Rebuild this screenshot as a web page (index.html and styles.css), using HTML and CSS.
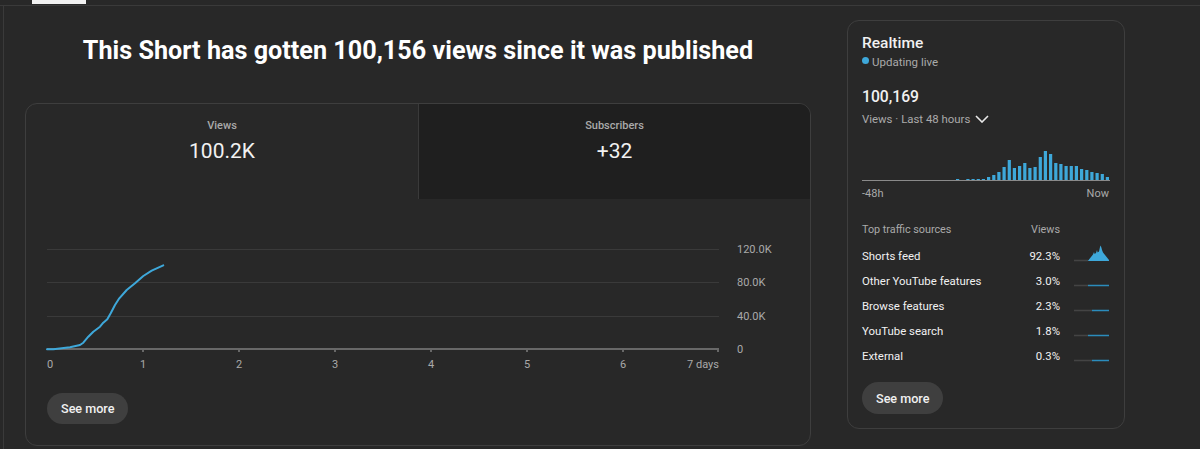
FILE: index.html
```html
<!DOCTYPE html>
<html lang="en">
<head>
  <meta charset="UTF-8" />
  <meta name="viewport" content="width=device-width, initial-scale=1.0"/>
  <title>Short analytics - Overview</title>
  <link rel="stylesheet" href="styles.css">
</head>
<body>
  <div class="topbar"><span class="tab-indicator"></span></div>

  <div class="main">
    <section class="overview">
      <h1 class="headline">This Short has gotten 100,156 views since it was published</h1>

      <div class="card chart-card">
        <div class="metric-tabs">
          <div class="metric-tab active">
            <div class="metric-label">Views</div>
            <div class="metric-value">100.2K</div>
          </div>
          <div class="metric-tab">
            <div class="metric-label">Subscribers</div>
            <div class="metric-value">+32</div>
          </div>
        </div>

        <svg class="line-chart" width="784" height="175" viewBox="0 0 784 175">
          <g class="grid">
            <line x1="21" y1="50.5" x2="693" y2="50.5" />
            <line x1="21" y1="83.5" x2="693" y2="83.5" />
            <line x1="21" y1="117.5" x2="693" y2="117.5" />
          </g>
          <g class="axis">
            <line x1="21" y1="150" x2="693" y2="150" />
            <line x1="117" y1="150" x2="117" y2="153" />
            <line x1="213" y1="150" x2="213" y2="153" />
            <line x1="309" y1="150" x2="309" y2="153" />
            <line x1="405" y1="150" x2="405" y2="153" />
            <line x1="501" y1="150" x2="501" y2="153" />
            <line x1="597" y1="150" x2="597" y2="153" />
            <line x1="692" y1="150" x2="692" y2="153" />
          </g>
          <g class="axis-text">
            <text x="711" y="54">120.0K</text>
            <text x="711" y="87">80.0K</text>
            <text x="711" y="121">40.0K</text>
            <text x="711" y="154">0</text>
            <text x="21" y="169">0</text>
            <text x="117" y="169" text-anchor="middle">1</text>
            <text x="213" y="169" text-anchor="middle">2</text>
            <text x="309" y="169" text-anchor="middle">3</text>
            <text x="405" y="169" text-anchor="middle">4</text>
            <text x="501" y="169" text-anchor="middle">5</text>
            <text x="597" y="169" text-anchor="middle">6</text>
            <text x="693" y="169" text-anchor="end">7 days</text>
          </g>
          <polyline class="views-line" points="21,150.3 27.3,150.3 44,148.3 54,146 57.3,143.7 62.3,137.7 67.3,132.7 74,127.7 77.3,123.7 81.3,120.3 84.7,114.3 89,106 93.3,99.3 100.7,91 109,84.3 117.3,77 125.7,71.7 137.3,66.3" />
        </svg>

        <button class="see-more">See more</button>
      </div>
    </section>

    <aside class="card realtime">
      <div class="rt-title">Realtime</div>
      <div class="rt-live"><span class="live-dot"></span>Updating live</div>

      <div class="rt-total">100,169</div>
      <div class="rt-range">
        Views · Last 48 hours
        <svg class="chevron" width="14" height="8" viewBox="0 0 14 8">
          <path d="M1 1l6 6 6-6" />
        </svg>
      </div>

      <svg class="rt-bars" width="248" height="42" viewBox="0 0 248 42">
        <line class="rt-base" x1="0" y1="40.5" x2="248" y2="40.5" />
        <g class="bar">
          <rect x="94.0" y="39" width="3.2" height="1" />
          <rect x="104.3" y="39" width="3.2" height="1" />
          <rect x="109.5" y="39" width="3.2" height="1" />
          <rect x="114.7" y="39" width="3.2" height="1" />
          <rect x="119.8" y="39" width="3.2" height="1" />
          <rect x="125.0" y="37" width="3.2" height="3" />
          <rect x="130.2" y="35" width="3.2" height="5" />
          <rect x="135.3" y="32" width="3.2" height="8" />
          <rect x="140.5" y="27" width="3.2" height="13" />
          <rect x="145.7" y="20" width="3.2" height="20" />
          <rect x="150.8" y="28" width="3.2" height="12" />
          <rect x="156.0" y="26" width="3.2" height="14" />
          <rect x="161.2" y="23" width="3.2" height="17" />
          <rect x="166.3" y="28" width="3.2" height="12" />
          <rect x="171.5" y="27" width="3.2" height="13" />
          <rect x="176.7" y="17" width="3.2" height="23" />
          <rect x="181.8" y="11" width="3.2" height="29" />
          <rect x="187.0" y="14" width="3.2" height="26" />
          <rect x="192.2" y="23" width="3.2" height="17" />
          <rect x="197.3" y="24" width="3.2" height="16" />
          <rect x="202.5" y="26" width="3.2" height="14" />
          <rect x="207.7" y="26" width="3.2" height="14" />
          <rect x="212.8" y="26" width="3.2" height="14" />
          <rect x="218.0" y="29" width="3.2" height="11" />
          <rect x="223.2" y="30" width="3.2" height="10" />
          <rect x="228.3" y="32" width="3.2" height="8" />
          <rect x="233.5" y="33" width="3.2" height="7" />
          <rect x="238.7" y="34" width="3.2" height="6" />
          <rect x="243.8" y="37" width="3.2" height="3" />
        </g>
      </svg>
      <div class="rt-axis"><span>-48h</span><span>Now</span></div>

      <div class="traffic">
        <div class="traffic-row traffic-head">
          <span>Top traffic sources</span>
          <span class="pct">Views</span>
          <span></span>
        </div>
        <div class="traffic-row">
          <span>Shorts feed</span>
          <span class="pct">92.3%</span>
          <svg class="spark" width="36" height="25" viewBox="0 0 36 25">
            <line class="spark-off" x1="0" y1="17.5" x2="14" y2="17.5" />
            <polygon class="spark-area" points="14,17.8 17,14 19,11.5 20,9 20.6,11 22,10 23,7 23.6,9.5 25,8.5 26,4 26.7,2.5 27.5,5 28,7 29,9.5 31,12 33,14.5 35,17 35,18 14,18" />
          </svg>
        </div>
        <div class="traffic-row">
          <span>Other YouTube features</span>
          <span class="pct">3.0%</span>
          <svg class="spark" width="36" height="25" viewBox="0 0 36 25">
            <line class="spark-off" x1="0" y1="17.5" x2="14" y2="17.5" />
            <line class="spark-on" x1="14" y1="17.5" x2="35" y2="17.5" />
          </svg>
        </div>
        <div class="traffic-row">
          <span>Browse features</span>
          <span class="pct">2.3%</span>
          <svg class="spark" width="36" height="25" viewBox="0 0 36 25">
            <line class="spark-off" x1="0" y1="17.5" x2="18" y2="17.5" />
            <line class="spark-on" x1="18" y1="17.5" x2="35" y2="17.5" />
          </svg>
        </div>
        <div class="traffic-row">
          <span>YouTube search</span>
          <span class="pct">1.8%</span>
          <svg class="spark" width="36" height="25" viewBox="0 0 36 25">
            <line class="spark-off" x1="0" y1="17.5" x2="14" y2="17.5" />
            <line class="spark-on" x1="14" y1="17.5" x2="35" y2="17.5" />
          </svg>
        </div>
        <div class="traffic-row">
          <span>External</span>
          <span class="pct">0.3%</span>
          <svg class="spark" width="36" height="25" viewBox="0 0 36 25">
            <line class="spark-off" x1="0" y1="17.5" x2="18" y2="17.5" />
            <line class="spark-on" x1="18" y1="17.5" x2="35" y2="17.5" />
          </svg>
        </div>
      </div>

      <button class="see-more">See more</button>
    </aside>
  </div>
</body>
</html>
```

FILE: styles.css
```css
* {
  box-sizing: border-box;
  margin: 0;
  padding: 0;
}

body {
  font-family: Roboto, 'Noto Sans', sans-serif;
  background-color: #282828;
  color: #f1f1f1;
  overflow: hidden;
}

.topbar {
  height: 6px;
  border-bottom: 1px solid #3a3a3a;
  padding-left: 32px;
}

.tab-indicator {
  display: block;
  width: 54px;
  height: 4px;
  background-color: #f1f1f1;
}

.main {
  display: flex;
  align-items: flex-start;
  gap: 36px;
  margin-left: 3px;
  border-left: 1px solid #3a3a3a;
  padding: 14px 0 0 21px;
  min-height: 443px;
}

.overview {
  width: 786px;
}

.headline {
  font-size: 25.2px;
  line-height: 32px;
  font-weight: 700;
  color: #fff;
  text-align: center;
  margin: 15px 0 36px;
}

.card {
  border: 1px solid #3e3e3e;
  border-radius: 12px;
  overflow: hidden;
}

/* tarjeta del grafico */
.metric-tabs {
  display: grid;
  grid-template-columns: 1fr 1fr;
  height: 95px;
}

.metric-tab {
  text-align: center;
  padding-top: 14px;
  background-color: #1f1f1f;
  border-left: 1px solid #3a3a3a;
}

.metric-tab.active {
  background-color: transparent;
  border-left: none;
}

.metric-label {
  font-size: 11px;
  line-height: 16px;
  font-weight: 500;
  color: #aaa;
}

.metric-value {
  font-size: 21px;
  line-height: 28px;
  margin-top: 3px;
  color: #f1f1f1;
}

.line-chart {
  display: block;
}

.grid line {
  stroke: #3a3a3a;
  stroke-width: 1;
}

.axis line {
  stroke: #686868;
  stroke-width: 2;
}

.axis-text text {
  font-family: Roboto, sans-serif;
  font-size: 11px;
  fill: #aaa;
}

.views-line {
  fill: none;
  stroke: #3ea8da;
  stroke-width: 2;
  stroke-linejoin: round;
  stroke-linecap: round;
}

.see-more {
  display: block;
  height: 31px;
  padding: 0 14px;
  border: none;
  border-radius: 16px;
  background-color: #3f3f3f;
  color: #f1f1f1;
  font-family: Roboto, sans-serif;
  font-size: 12.6px;
  font-weight: 500;
  cursor: pointer;
}

.chart-card .see-more {
  margin: 19px 0 21px 21px;
}

/* tiempo real */
.realtime {
  width: 278px;
  padding: 11px 14px 14px;
}

.rt-title {
  font-size: 15.5px;
  line-height: 22px;
  font-weight: 500;
}

.rt-live {
  display: flex;
  align-items: flex-start;
  font-size: 11.5px;
  line-height: 16px;
  color: #aaa;
}

.live-dot {
  width: 7px;
  height: 7px;
  border-radius: 50%;
  background-color: #3ea8da;
  margin: 3px 3px 0 0;
}

.rt-total {
  font-size: 15.7px;
  line-height: 22px;
  font-weight: 500;
  margin-top: 16px;
}

.rt-range {
  display: flex;
  align-items: center;
  gap: 5px;
  font-size: 11.4px;
  line-height: 16px;
  color: #aaa;
  margin-top: 3px;
}

.chevron path {
  fill: none;
  stroke: #e8e8e8;
  stroke-width: 1.6;
}

.rt-bars {
  display: block;
  margin-top: 13px;
}

.rt-base {
  stroke: #8a8a8a;
  stroke-width: 1;
}

.bar rect {
  fill: #3ea8da;
}

.rt-axis {
  display: flex;
  justify-content: space-between;
  font-size: 11px;
  line-height: 14px;
  color: #aaa;
  margin-top: 5px;
  padding-right: 1px;
}

.traffic {
  margin-top: 16px;
}

.traffic-row {
  display: grid;
  grid-template-columns: 1fr 50px 36px;
  column-gap: 14px;
  align-items: center;
  height: 25px;
  font-size: 11.4px;
  line-height: 16px;
}

.traffic-head {
  height: 26px;
  font-size: 10.8px;
  color: #aaa;
}

.pct {
  text-align: right;
}

.spark {
  display: block;
}

.spark-off {
  stroke: #444;
  stroke-width: 1.5;
}

.spark-on {
  stroke: #2b8cbc;
  stroke-width: 1.5;
}

.spark-area {
  fill: #3ea8da;
}

.realtime .see-more {
  height: 32px;
  margin-top: 14px;
}
```
